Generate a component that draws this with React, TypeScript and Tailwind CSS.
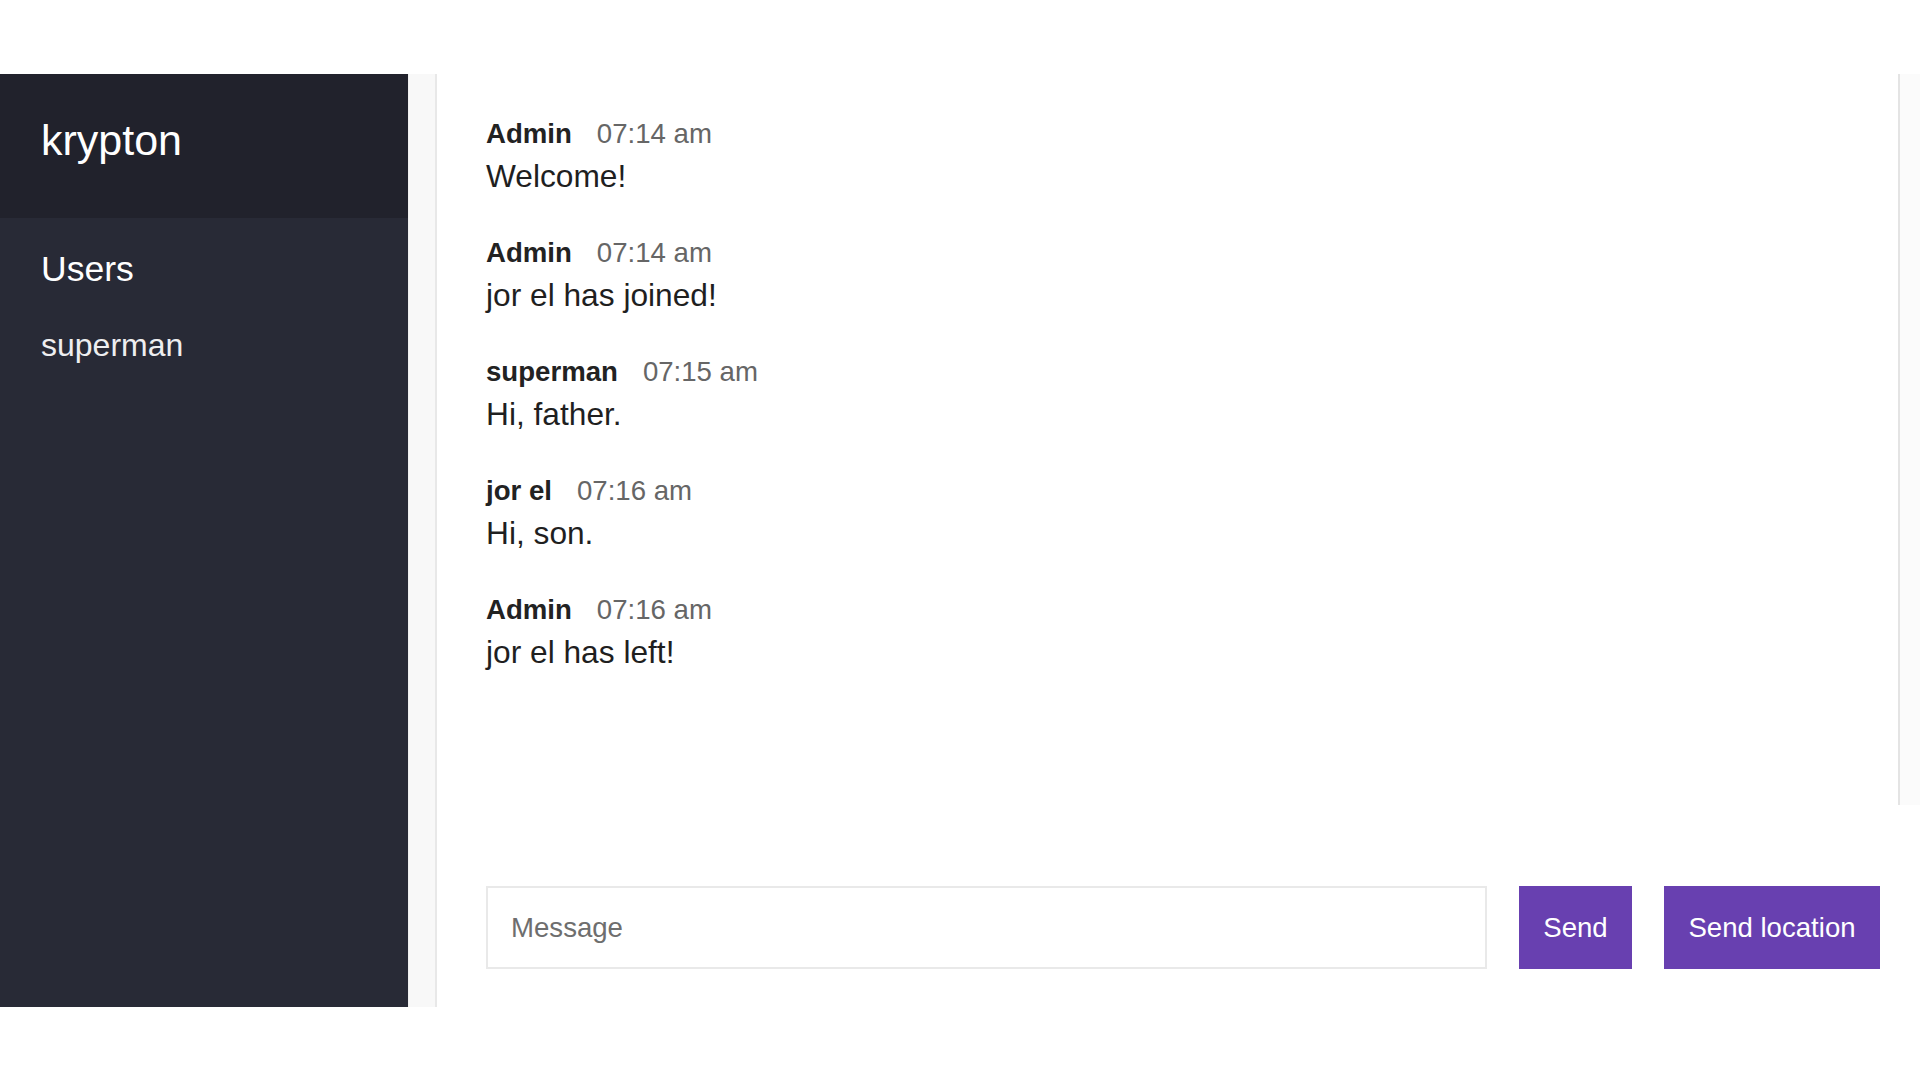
import React from "react";

const messages = [
  { name: "Admin", time: "07:14 am", text: "Welcome!" },
  { name: "Admin", time: "07:14 am", text: "jor el has joined!" },
  { name: "superman", time: "07:15 am", text: "Hi, father." },
  { name: "jor el", time: "07:16 am", text: "Hi, son." },
  { name: "Admin", time: "07:16 am", text: "jor el has left!" },
];

export default function App() {
  return (
    <div className="w-[1920px] h-[1080px] bg-white font-['Liberation_Sans',Arial,sans-serif] overflow-hidden">
      <div className="mt-[74px] h-[933px] flex">
        {/* Sidebar */}
        <div className="w-[408px] h-full bg-[#282a36] text-white flex flex-col shrink-0">
          <div className="h-[144px] bg-[#21222c] px-[41px] pt-[40px]">
            <h2 className="text-[43px] leading-[52px] font-normal">krypton</h2>
          </div>
          <h3 className="mt-[31px] px-[41px] text-[35.5px] leading-[40px] font-normal">Users</h3>
          <ul className="mt-[38px] px-[41px]">
            <li className="text-[32px] leading-[36px] text-[#eeeef0]">superman</li>
          </ul>
        </div>
        {/* Sidebar scrollbar track */}
        <div className="w-[29px] h-full bg-[#f8f8f8] border-l border-l-[#f0f0f0] border-r-2 border-r-[#e8e8e8] shrink-0" />
        {/* Main */}
        <div className="flex-1 h-full flex flex-col">
          <div className="h-[731px] flex">
            <div className="flex-1 pl-[49px] pt-[44px]">
              {messages.map((m, i) => (
                <div key={i} className="mb-[43px]">
                  <p className="text-[27.6px] leading-[32px] mb-[8px]">
                    <span className="font-bold text-[#222222] mr-[25px]">{m.name}</span>
                    <span className="text-[#666666]">{m.time}</span>
                  </p>
                  <p className="text-[31.7px] leading-[36px] text-[#1f1f1f]">{m.text}</p>
                </div>
              ))}
            </div>
            <div className="w-[22px] h-full bg-[#fbfbfb] border-l-2 border-l-[#e4e4e4]" />
          </div>
          <div className="flex-1 flex items-start pt-[81px] pl-[49px] pr-[40px] gap-[32px]">
            <div className="flex-1 h-[83px] border-2 border-[#e9e9e9] flex items-center px-[23px]">
              <span className="text-[27.6px] text-[#6e6e6e]">Message</span>
            </div>
            <button className="w-[113px] h-[83px] bg-[#6840b0] text-white text-[27.6px] flex items-center justify-center">
              Send
            </button>
            <button className="w-[216px] h-[83px] bg-[#6840b0] text-white text-[27.6px] flex items-center justify-center">
              Send location
            </button>
          </div>
        </div>
      </div>
    </div>
  );
}
